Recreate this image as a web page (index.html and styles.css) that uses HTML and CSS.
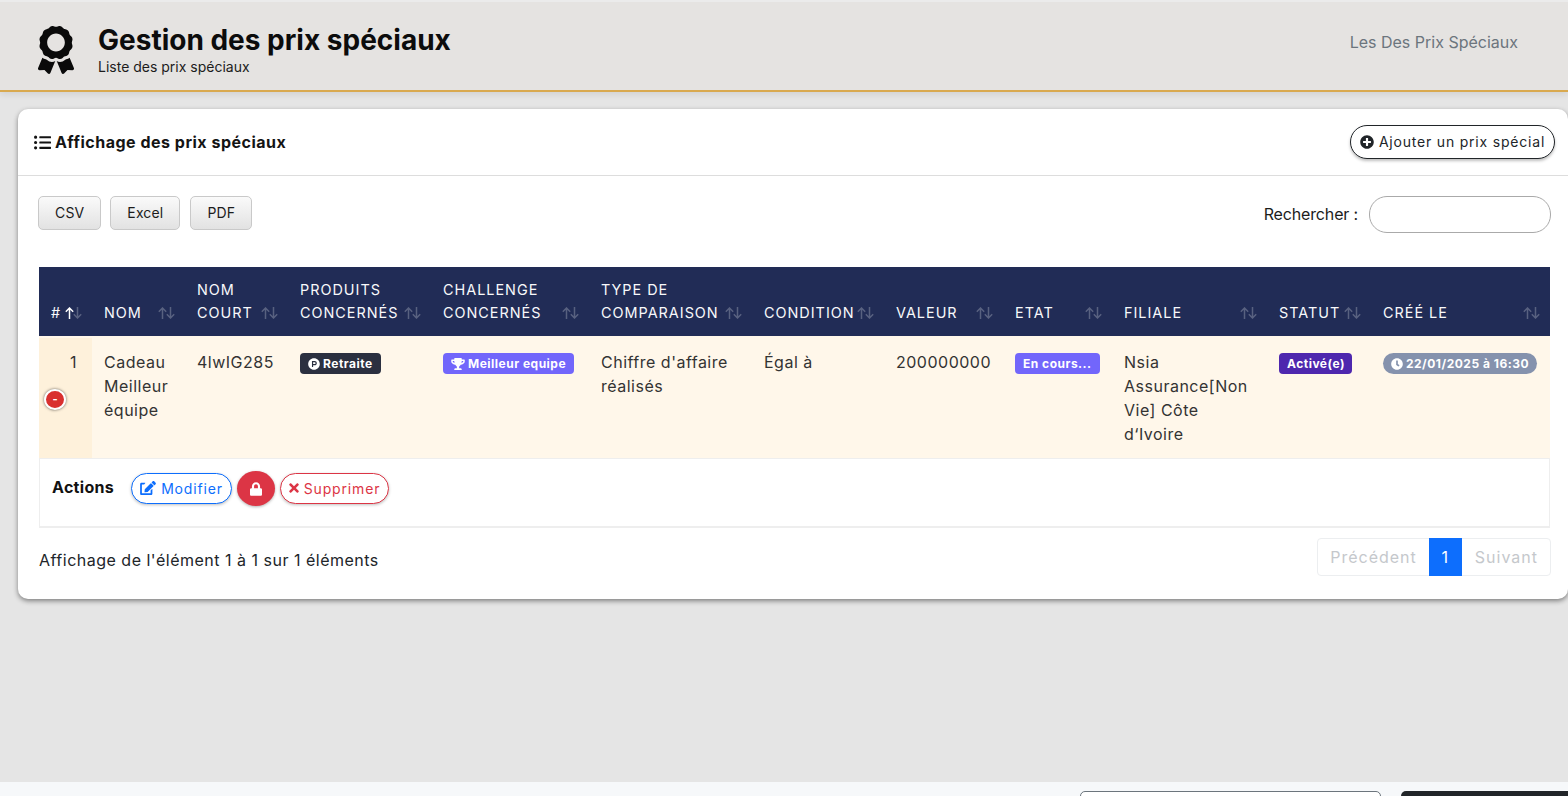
FILE: index.html
```html
<!DOCTYPE html>
<html lang="fr">
<head>
<meta charset="utf-8">
<title>Gestion des prix spéciaux</title>
<link rel="stylesheet" href="styles.css">
</head>
<body>
<svg class="defs" width="0" height="0" aria-hidden="true">
  <symbol id="sort" viewBox="0 0 17 12">
    <path class="sort-up" d="M4.500 12V1M.8 4.700 4.500 1l3.700 3.700" fill="none" stroke-width="1.500"/>
    <path class="sort-down" d="M12.500 0v11M8.800 7.300l3.700 3.700 3.700-3.700" fill="none" stroke-width="1.500"/>
  </symbol>
</svg>
<div class="app">
  <header class="topbar">
    <div class="brand">
      <svg class="award" viewBox="0 0 384 512"><path d="M97.12 362.63c-8.69-8.69-4.16-6.24-25.12-11.85-9.51-2.55-17.87-7.45-25.43-13.32L1.2 448.7c-4.39 10.77 3.81 22.47 15.43 22.03l52.69-2.01L105.56 507c8 8.44 22.04 5.81 26.43-4.96l52.05-127.62c-10.84 6.04-22.87 9.58-35.31 9.58-19.5 0-37.82-7.59-51.61-21.37zM382.8 448.7l-45.37-111.24c-7.56 5.88-15.92 10.77-25.43 13.32-21.07 5.64-16.45 3.18-25.12 11.85-13.79 13.78-32.12 21.37-51.62 21.37-12.44 0-24.47-3.55-35.31-9.58L252 502.04c4.39 10.77 18.44 13.4 26.43 4.96l36.25-38.28 52.69 2.01c11.62.44 19.82-11.27 15.43-22.03zM263 340c15.28-15.55 17.03-14.21 38.79-20.14 13.89-3.79 24.75-14.84 28.47-28.98 7.48-28.4 5.54-24.97 25.95-45.75 10.17-10.35 14.14-25.44 10.42-39.58-7.47-28.38-7.48-24.42 0-52.83 3.72-14.14-.25-29.23-10.42-39.58-20.41-20.78-18.47-17.36-25.95-45.75-3.72-14.14-14.58-25.19-28.47-28.98-27.88-7.61-24.52-5.62-44.95-26.41-10.17-10.35-25-14.4-38.89-10.61-27.87 7.6-23.98 7.61-51.9 0-13.89-3.79-28.72.25-38.89 10.61-20.41 20.78-17.05 18.8-44.94 26.41-13.89 3.79-24.75 14.84-28.47 28.98-7.47 28.39-5.54 24.97-25.95 45.75-10.17 10.35-14.15 25.44-10.42 39.58 7.47 28.36 7.48 24.4 0 52.82-3.72 14.14.25 29.23 10.42 39.59 20.41 20.78 18.47 17.35 25.95 45.75 3.72 14.14 14.58 25.19 28.47 28.98C104.6 325.96 106.27 325 121 340c13.23 13.47 33.84 15.88 49.74 5.82a39.676 39.676 0 0 1 42.53 0c15.89 10.06 36.5 7.65 49.73-5.82zM97.660 175.960c0-53.030 42.240-96.020 94.340-96.020s94.340 42.990 94.340 96.020-42.240 96.020-94.340 96.020-94.340-42.990-94.340-96.020z"/></svg>
      <div class="brand-text">
        <h1>Gestion des prix spéciaux</h1>
        <p>Liste des prix spéciaux</p>
      </div>
    </div>
    <div class="crumb">Les Des Prix Spéciaux</div>
  </header>

  <main class="content">
    <section class="card">
      <div class="card-head">
        <h2><svg class="ic-list" viewBox="0 0 512 512"><path d="M48 48a48 48 0 1 0 48 48 48 48 0 0 0-48-48zm0 160a48 48 0 1 0 48 48 48 48 0 0 0-48-48zm0 160a48 48 0 1 0 48 48 48 48 0 0 0-48-48zm448 16H176a16 16 0 0 0-16 16v32a16 16 0 0 0 16 16h320a16 16 0 0 0 16-16v-32a16 16 0 0 0-16-16zm0-320H176a16 16 0 0 0-16 16v32a16 16 0 0 0 16 16h320a16 16 0 0 0 16-16V80a16 16 0 0 0-16-16zm0 160H176a16 16 0 0 0-16 16v32a16 16 0 0 0 16 16h320a16 16 0 0 0 16-16v-32a16 16 0 0 0-16-16z"/></svg>Affichage des prix spéciaux</h2>
        <button class="btn-add"><svg class="ic-13" viewBox="0 0 512 512"><path d="M256 8C119 8 8 119 8 256s111 248 248 248 248-111 248-248S393 8 256 8zm144 276c0 6.600-5.400 12-12 12h-92v92c0 6.600-5.400 12-12 12h-56c-6.600 0-12-5.400-12-12v-92h-92c-6.600 0-12-5.400-12-12v-56c0-6.600 5.400-12 12-12h92v-92c0-6.600 5.400-12 12-12h56c6.600 0 12 5.400 12 12v92h92c6.600 0 12 5.400 12 12v56z"/></svg>Ajouter un prix spécial</button>
      </div>

      <div class="toolbar">
        <div class="exports">
          <button class="btn-export">CSV</button>
          <button class="btn-export">Excel</button>
          <button class="btn-export">PDF</button>
        </div>
        <label class="search"><span class="search-label">Rechercher :</span><input type="search" class="search-input"></label>
      </div>

      <div class="table-wrap">
        <table class="grid">
          <colgroup>
            <col class="c1"><col class="c2"><col class="c3"><col class="c4"><col class="c5"><col class="c6"><col class="c7"><col class="c8"><col class="c9"><col class="c10"><col class="c11"><col class="c12">
          </colgroup>
          <thead>
            <tr>
              <th><div class="th-in"><span>#</span><svg class="sort sort-active"><use href="#sort"/></svg></div></th>
              <th><div class="th-in"><span>NOM</span><svg class="sort"><use href="#sort"/></svg></div></th>
              <th><div class="th-in"><span>NOM COURT</span><svg class="sort"><use href="#sort"/></svg></div></th>
              <th><div class="th-in"><span>PRODUITS CONCERNÉS</span><svg class="sort"><use href="#sort"/></svg></div></th>
              <th><div class="th-in"><span>CHALLENGE CONCERNÉS</span><svg class="sort"><use href="#sort"/></svg></div></th>
              <th><div class="th-in"><span>TYPE DE COMPARAISON</span><svg class="sort"><use href="#sort"/></svg></div></th>
              <th><div class="th-in"><span>CONDITION</span><svg class="sort"><use href="#sort"/></svg></div></th>
              <th><div class="th-in"><span>VALEUR</span><svg class="sort"><use href="#sort"/></svg></div></th>
              <th><div class="th-in"><span>ETAT</span><svg class="sort"><use href="#sort"/></svg></div></th>
              <th><div class="th-in"><span>FILIALE</span><svg class="sort"><use href="#sort"/></svg></div></th>
              <th><div class="th-in"><span>STATUT</span><svg class="sort"><use href="#sort"/></svg></div></th>
              <th><div class="th-in"><span>CRÉÉ LE</span><svg class="sort"><use href="#sort"/></svg></div></th>
            </tr>
          </thead>
          <tbody>
            <tr class="row">
              <td class="cell-index">1<span class="toggle">-</span></td>
              <td>Cadeau Meilleur équipe</td>
              <td>4lwIG285</td>
              <td><span class="badge badge-dark"><svg class="ic-11" viewBox="0 0 512 512"><path d="M326.300 218.800c0 20.500-16.700 37.200-37.200 37.200h-70.300v-74.400h70.300c20.500 0 37.200 16.700 37.200 37.200zM504 256c0 137-111 248-248 248S8 393 8 256 119 8 256 8s248 111 248 248zm-128.100-37.200c0-47.900-38.900-86.800-86.800-86.800H169.200v248h49.600v-74.400h70.300c47.900 0 86.800-38.900 86.800-86.800z"/></svg>Retraite</span></td>
              <td><span class="badge badge-violet"><svg class="ic-trophy" viewBox="0 0 576 512"><path d="M552 64H448V24c0-13.300-10.700-24-24-24H152c-13.300 0-24 10.700-24 24v40H24C10.700 64 0 74.700 0 88v56c0 35.700 22.500 72.400 61.900 100.700 31.500 22.700 69.800 37.100 110 41.700C203.300 338.500 240 360 240 360v72h-48c-35.300 0-64 20.700-64 56v12c0 6.600 5.400 12 12 12h296c6.600 0 12-5.400 12-12v-12c0-35.300-28.700-56-64-56h-48v-72s36.700-21.500 68.100-73.600c40.300-4.600 78.600-19 110-41.700 39.300-28.300 61.900-65 61.900-100.700V88c0-13.300-10.700-24-24-24zM99.300 192.800C74.900 175.200 64 155.600 64 144v-16h64.200c1 32.600 5.800 61.200 12.800 86.200-15.100-5.200-29.200-12.400-41.700-21.400zM512 144c0 16.100-17.700 36.100-35.300 48.800-12.500 9-26.700 16.200-41.800 21.400 7-25 11.800-53.600 12.800-86.200H512v16z"/></svg>Meilleur equipe</span></td>
              <td>Chiffre d'affaire réalisés</td>
              <td>Égal à</td>
              <td>200000000</td>
              <td><span class="badge badge-violet">En cours...</span></td>
              <td>Nsia Assurance[Non Vie] Côte d‘Ivoire</td>
              <td><span class="badge badge-indigo">Activé(e)</span></td>
              <td><span class="badge badge-date"><svg class="ic-11" viewBox="0 0 512 512"><path d="M256 8C119 8 8 119 8 256s111 248 248 248 248-111 248-248S393 8 256 8zm57.100 350.100L224.900 294c-3.100-2.300-4.900-5.900-4.900-9.700V116c0-6.600 5.400-12 12-12h48c6.600 0 12 5.400 12 12v137.700l63.500 46.200c5.400 3.900 6.500 11.400 2.600 16.800l-28.200 38.800c-3.900 5.300-11.400 6.500-16.800 2.600z"/></svg>22/01/2025 à 16:30</span></td>
            </tr>
            <tr>
              <td colspan="12" class="details">
                <div class="actions">
                  <strong class="actions-label">Actions</strong>
                  <button class="btn-pill btn-blue"><svg class="ic-edit" viewBox="0 0 576 512"><path d="M402.600 83.200l90.200 90.200c3.800 3.800 3.800 10 0 13.800L274.400 405.600l-92.800 10.300c-12.400 1.400-22.900-9.100-21.500-21.500l10.300-92.800L388.800 83.200c3.800-3.800 10-3.800 13.800 0zm162-22.900l-48.800-48.800c-15.200-15.200-39.900-15.200-55.200 0l-35.400 35.400c-3.800 3.800-3.800 10 0 13.800l90.200 90.200c3.800 3.800 10 3.800 13.800 0l35.400-35.400c15.200-15.300 15.200-40 0-55.200zM384 346.200V448H64V128h73.200c3.200 0 6.200-1.300 8.500-3.500l40-40c7.600-7.600 2.200-20.500-8.500-20.500H48C21.500 64 0 85.500 0 112v352c0 26.500 21.500 48 48 48h352c26.500 0 48-21.500 48-48V306.200c0-10.700-12.900-16-20.500-8.500l-40 40c-2.200 2.300-3.500 5.300-3.500 8.500z"/></svg>Modifier</button>
                  <button class="btn-lock"><svg class="ic-lock" viewBox="0 0 448 512"><path d="M400 224h-24v-72C376 68.200 307.800 0 224 0S72 68.200 72 152v72H48c-26.500 0-48 21.500-48 48v192c0 26.500 21.500 48 48 48h352c26.500 0 48-21.500 48-48V272c0-26.500-21.500-48-48-48zm-104 0H152v-72c0-39.700 32.300-72 72-72s72 32.300 72 72v72z"/></svg></button>
                  <button class="btn-pill btn-red"><svg class="ic-times" viewBox="0 0 352 512"><path d="M242.720 256l100.070-100.070c12.280-12.280 12.280-32.190 0-44.480l-22.240-22.240c-12.280-12.280-32.190-12.280-44.480 0L176 189.280 75.930 89.210c-12.280-12.280-32.190-12.280-44.480 0L9.210 111.450c-12.280 12.280-12.280 32.190 0 44.480L109.280 256 9.210 356.070c-12.280 12.280-12.280 32.190 0 44.480l22.240 22.240c12.280 12.280 32.200 12.280 44.480 0L176 322.720l100.070 100.070c12.280 12.280 32.200 12.280 44.480 0l22.240-22.240c12.280-12.280 12.280-32.190 0-44.480L242.720 256z"/></svg>Supprimer</button>
                </div>
              </td>
            </tr>
          </tbody>
        </table>
      </div>

      <div class="table-foot">
        <div class="info">Affichage de l'élément 1 à 1 sur 1 éléments</div>
        <nav class="pager">
          <span class="page page-prev">Précédent</span>
          <span class="page page-current">1</span>
          <span class="page page-next">Suivant</span>
        </nav>
      </div>
    </section>
  </main>

  <footer class="bottom">
    <button class="foot-outline" aria-label="Action"></button>
    <button class="foot-dark" aria-label="Action"></button>
  </footer>
</div>
</body>
</html>
```
FILE: styles.css
```css
* { box-sizing: border-box; }
html, body { margin: 0; padding: 0; height: 100%; overflow: hidden; }
body {
  font-family: "Inter", "Liberation Sans", sans-serif;
  font-size: 16px;
  line-height: 24px;
  letter-spacing: .5px;
  color: #212529;
  background: #e5e5e5;
}
.defs { position: absolute; }
button { font-family: inherit; cursor: pointer; }
svg { fill: currentColor; }

.app { height: 100vh; display: flex; flex-direction: column; }

/* Header */
.topbar {
  height: 92px;
  flex: none;
  display: flex;
  align-items: flex-start;
  justify-content: space-between;
  background: #e5e3e1;
  border-top: 2px solid #ebebeb;
  border-bottom: 2px solid #d9a94f;
  box-shadow: 0 3px 6px rgba(0, 0, 0, .08);
  padding: 0 50px 0 38px;
}
.brand { display: flex; align-items: flex-start; }
.award { width: 36px; height: 48px; margin: 24px 24px 0 0; fill: #0a0a0a; }
.brand-text { padding-top: 19px; }
.brand-text h1 {
  margin: 0;
  font-size: 28px;
  line-height: 38px;
  font-weight: 700;
  letter-spacing: 0;
  color: #0c0c0c;
}
.brand-text p {
  margin: 0;
  font-size: 14px;
  line-height: 16px;
  letter-spacing: 0;
  color: #1c1c1c;
}
.crumb { padding-top: 28px; color: #6c757d; font-size: 16px; letter-spacing: 0; }

/* Main */
.content { flex: 1; padding: 17px 0 0 18px; min-height: 0; }
.card {
  background: #fff;
  border-radius: 10px;
  box-shadow: 0 2px 5px rgba(0, 0, 0, .45);
  height: 490px;
}
.card-head {
  height: 67px;
  display: flex;
  align-items: center;
  justify-content: space-between;
  padding: 0 13px 0 16px;
  border-bottom: 1px solid #ddd;
}
.card-head h2 {
  margin: 0;
  display: flex;
  align-items: center;
  font-size: 16px;
  font-weight: 700;
  color: #141414;
}
.ic-list { width: 17px; height: 17px; margin-right: 4px; }
.btn-add {
  height: 34px;
  width: 205px;
  padding: 0;
  display: flex;
  align-items: center;
  justify-content: center;
  gap: 5px;
  background: #fff;
  border: 1px solid #212529;
  border-radius: 17px;
  box-shadow: 0 2px 3px rgba(0, 0, 0, .25);
  font-size: 14px;
  letter-spacing: .8px;
  color: #212529;
  margin-top: -1px;
}
.ic-13 { width: 14px; height: 14px; }

/* Toolbar */
.toolbar {
  display: flex;
  justify-content: space-between;
  align-items: flex-start;
  padding: 20px 17px 0 20px;
  height: 91px;
}
.exports { display: flex; gap: 9px; }
.btn-export {
  height: 34px;
  padding: 0 16px 2px;
  font-size: 14px;
  letter-spacing: .15px;
  color: #1c1c1c;
  border: 1px solid #c9c9c9;
  border-radius: 5px;
  background: linear-gradient(#fafafa, #e2e2e2);
}
.btn-export + .btn-export + .btn-export { margin-left: 1px; }
.search { display: flex; align-items: center; gap: 11px; font-size: 16px; letter-spacing: -.15px; color: #1c1c1c; }
.search-label { margin-top: -2px; }
.search-input {
  width: 182px;
  height: 37px;
  border: 1px solid #aaa;
  border-radius: 18px;
  background: #fff;
  outline: none;
}

/* Table */
.table-wrap { padding: 0 18px 0 21px; }
.grid { width: 1511px; table-layout: fixed; border-collapse: separate; border-spacing: 0; }
.c1 { width: 53px; }
.c2 { width: 93px; }
.c3 { width: 103px; }
.c4 { width: 143px; }
.c5 { width: 158px; }
.c6 { width: 163px; }
.c7 { width: 132px; }
.c8 { width: 119px; }
.c9 { width: 109px; }
.c10 { width: 155px; }
.c11 { width: 104px; }
.c12 { width: 179px; }
.grid th {
  background: #212c56;
  color: #f8f9fb;
  font-size: 14.400px;
  line-height: 23px;
  font-weight: 400;
  letter-spacing: 1px;
  text-align: left;
  vertical-align: bottom;
  padding: 11px 10px 12px 12px;
  height: 69px;
}
.th-in { display: flex; justify-content: space-between; align-items: flex-end; }
.sort {
  --sort-up: rgba(255, 255, 255, .25);
  flex: none;
  width: 17px;
  height: 12px;
  margin: 0 0 5px 2px;
  color: rgba(255, 255, 255, .25);
}
.sort-active { --sort-up: #fff; }
.sort-up { stroke: var(--sort-up); }
.sort-down { stroke: currentColor; }
.row td {
  background: #fff7ea;
  color: #333;
  font-size: 16px;
  line-height: 24px;
  vertical-align: top;
  padding: 14px 12px 12px;
  border-bottom: 1px solid #eee;
  height: 123px;
}
.row td.cell-index {
  position: relative;
  background: #fef1db;
  text-align: right;
  padding-right: 15px;
  border-top: 2px solid #fff7ea;
  padding-top: 12px;
}
.toggle {
  position: absolute;
  left: 5px;
  top: 51px;
  width: 22px;
  height: 21px;
  border: 2px solid #fff;
  border-radius: 50%;
  background: #d9302f;
  box-shadow: 0 0 3px rgba(0, 0, 0, .6);
  color: #fff;
  font-size: 11px;
  line-height: 17px;
  font-weight: 700;
  text-align: center;
  letter-spacing: 0;
}
.badge {
  display: inline-flex;
  align-items: center;
  height: 21px;
  padding: 0 8px;
  border-radius: 4px;
  font-size: 12px;
  line-height: 21px;
  font-weight: 700;
  letter-spacing: .5px;
  color: #fff;
  white-space: nowrap;
  vertical-align: top;
  margin-top: 4px;
  position: relative;
  top: -1px;
}
.badge-dark { background: #2b3040; }
.badge-violet { background: #7266fb; }
.badge-indigo { background: #4e27ae; padding-right: 7px; }
.badge-date { background: #8592ad; border-radius: 11px; }
.ic-11 { width: 12px; height: 12px; margin-right: 3px; }
.ic-trophy { width: 14px; height: 12px; margin-right: 3px; }

.details {
  padding: 0 12px;
  height: 69px;
  vertical-align: top;
  border-left: 1px solid #eee;
  border-right: 1px solid #eee;
  border-bottom: 2px solid #eee;
}
.actions { display: flex; align-items: center; height: 56px; padding-top: 3px; }
.actions-label { font-size: 16px; font-weight: 700; color: #111; margin: 0 17px 4px 0; letter-spacing: .3px; }
.btn-pill {
  height: 31px;
  padding: 0 0 1px;
  display: inline-flex;
  align-items: center;
  justify-content: center;
  background: #fff;
  border-radius: 16px;
  border: 1px solid;
  box-shadow: 0 1px 3px rgba(0, 0, 0, .25);
  font-size: 14px;
  letter-spacing: .85px;
}
.btn-blue { width: 101px; color: #0d6efd; gap: 5px; }
.btn-red { width: 109px; color: #dc3545; gap: 5px; margin-left: 5px; }
.ic-edit { width: 16px; height: 14px; }
.ic-times { width: 10px; height: 14px; }
.btn-lock {
  width: 38px;
  height: 35px;
  margin-left: 5px;
  padding: 0;
  border: 0;
  border-radius: 50%;
  background: #dc3545;
  color: #fff;
  box-shadow: 0 1px 3px rgba(0, 0, 0, .3);
  display: inline-flex;
  align-items: center;
  justify-content: center;
}
.ic-lock { width: 12px; height: 14px; }

/* Footer of table */
.table-foot {
  display: flex;
  justify-content: space-between;
  align-items: flex-start;
  padding: 10px 17px 0 21px;
}
.info { padding-top: 10px; color: #212529; font-size: 16px; }
.pager {
  display: flex;
  height: 38px;
  border: 1px solid #eceef0;
  border-radius: 4px;
  font-size: 16px;
  line-height: 36px;
  letter-spacing: 1px;
}
.page { color: #c5c8cc; padding: 0 12px; }
.page-next { padding-left: 13px; }
.page-current {
  background: #0d6efd;
  color: #fff;
  width: 33px;
  padding: 0;
  text-align: center;
  margin: -1px 0;
  line-height: 38px;
}

/* Bottom bar */
.bottom {
  height: 14px;
  flex: none;
  display: flex;
  justify-content: flex-end;
  gap: 20px;
  background: #f6f8fa;
  padding-top: 9px;
  overflow: hidden;
}
.foot-outline { width: 301px; height: 36px; background: #fff; border: 1px solid #6c757d; border-radius: 5px; flex: none; }
.foot-dark { width: 167px; height: 36px; background: #212529; border: 0; border-radius: 5px 0 0 5px; flex: none; }
```
